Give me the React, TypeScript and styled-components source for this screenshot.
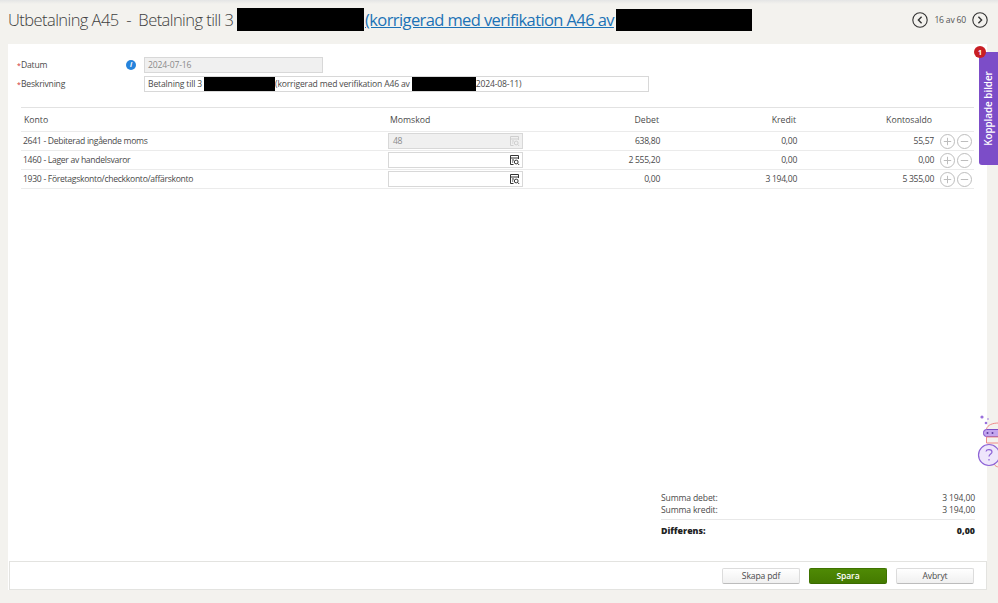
import React from 'react';
import styled, { createGlobalStyle } from 'styled-components';

const GlobalStyle = createGlobalStyle`
  html, body {
    margin: 0;
    padding: 0;
    height: 100%;
    overflow: hidden;
    background: #f3f2ee;
    font-family: "Open Sans", "Liberation Sans", sans-serif;
    color: #4a4a4a;
  }
`;

const Page = styled.div`
  position: relative;
  width: 998px;
  height: 603px;
  display: flex;
  flex-direction: column;
  overflow: hidden;
  background: linear-gradient(#e4e5e5, #f3f2ee 4px);
`;

const Header = styled.header`
  height: 44px;
  flex: none;
  display: flex;
  align-items: center;
  padding: 0 10px 5px 8px;
  box-sizing: border-box;
`;

const Title = styled.h1`
  margin: 0;
  display: flex;
  align-items: center;
  flex: 1;
  font-size: 16.5px;
  font-weight: 300;
  letter-spacing: -0.56px;
  color: #404040;
  white-space: pre;
`;

const TitleLink = styled.a`
  font-size: 16.5px;
  font-weight: 400;
  letter-spacing: -0.6px;
  color: #1c72b6;
  text-decoration: underline;
  margin: 0 2px 0 1px;
`;

const Redacted = styled.span<{ $w: number; $h: number }>`
  display: inline-block;
  flex: none;
  width: ${(p) => p.$w}px;
  height: ${(p) => p.$h}px;
  background: #000;
`;

const Pager = styled.div`
  display: flex;
  align-items: center;
  gap: 6px;
  font-size: 8.6px;
  letter-spacing: -0.2px;
  color: #555;
`;

const Panel = styled.main`
  margin: 0 11px 13px 8px;
  flex: 1;
  min-height: 0;
  background: #fff;
  display: flex;
  flex-direction: column;
`;

const Body = styled.div`
  flex: 1;
  display: flex;
  flex-direction: column;
  padding: 11px 13px 0;
`;

const FormRow = styled.div`
  display: grid;
  grid-template-columns: 105px 18px 1fr;
  align-items: center;
  height: 19px;
`;

const Label = styled.label`
  font-size: 8.6px;
  letter-spacing: -0.2px;
  color: #4a4a4a;
  margin-left: -4px;
  &::before {
    content: '*';
    display: inline-block;
    width: 4px;
    font-size: 7px;
    color: #d0312d;
  }
`;

const InfoDot = styled.span`
  width: 10px;
  height: 10px;
  border-radius: 50%;
  background: #2583dc;
  color: #fff;
  font-size: 7px;
  font-weight: 700;
  font-style: italic;
  display: flex;
  align-items: center;
  justify-content: center;
`;

const DateField = styled.div`
  width: 179px;
  height: 16px;
  box-sizing: border-box;
  background: #f0f0f0;
  border: 1px solid #d8d8d8;
  font-size: 8.6px;
  letter-spacing: -0.15px;
  color: #8a8a8a;
  padding: 0 3px;
  display: flex;
  align-items: center;
`;

const DescField = styled.div`
  width: 505px;
  height: 16px;
  box-sizing: border-box;
  background: #fff;
  border: 1px solid #d8d8d8;
  font-size: 8.6px;
  letter-spacing: -0.17px;
  color: #4a4a4a;
  padding: 0 3px;
  display: flex;
  align-items: center;
  white-space: pre;
`;

const Table = styled.div`
  margin-top: 14px;
  border-top: 1px solid #e2e2e2;
`;

const Row = styled.div<{ $head?: boolean }>`
  display: grid;
  grid-template-columns: 367px 135px 137px 137px 137px 40px;
  align-items: center;
  height: ${(p) => (p.$head ? 23 : 18)}px;
  border-bottom: 1px solid #ebebeb;
  font-size: ${(p) => (p.$head ? 8.7 : 8.6)}px;
  letter-spacing: ${(p) => (p.$head ? 0 : -0.3)}px;
  color: #4a4a4a;
`;

const Cell = styled.div<{ $right?: boolean; $inset?: number; $end?: number }>`
  text-align: ${(p) => (p.$right ? 'right' : 'left')};
  padding-left: ${(p) => p.$inset ?? 0}px;
  padding-right: ${(p) => p.$end ?? 0}px;
  white-space: nowrap;
`;

const CodeField = styled.div<{ $disabled?: boolean }>`
  height: 16px;
  box-sizing: border-box;
  border: 1px solid #d8d8d8;
  background: ${(p) => (p.$disabled ? '#f0f0f0' : '#fff')};
  color: #8a8a8a;
  padding: 0 2px 0 4px;
  display: flex;
  align-items: center;
  justify-content: space-between;
`;

const Actions = styled.div`
  display: flex;
  gap: 2px;
  padding-left: 6px;
`;

const RoundAction = styled.span`
  width: 15px;
  height: 15px;
  flex: none;
  color: #bdbdbd;
  display: block;
`;

const Totals = styled.div`
  margin-top: auto;
  margin-left: 640px;
  width: 314px;
  padding-bottom: 24px;
  font-size: 8.6px;
  letter-spacing: -0.15px;
  color: #4a4a4a;
`;

const TotalLine = styled.div`
  display: flex;
  justify-content: space-between;
  height: 11.5px;
  line-height: 11.5px;
`;

const DiffLine = styled.div`
  display: flex;
  justify-content: space-between;
  margin-top: 3px;
  padding-top: 5px;
  border-top: 1px solid #e8e8e8;
  font-size: 8.8px;
  letter-spacing: 0;
  font-weight: 800;
  color: #222;
  line-height: 12px;
`;

const Footer = styled.footer`
  height: 29px;
  flex: none;
  box-sizing: border-box;
  margin-left: 1px;
  background: #fff;
  border: 1px solid #e3e3e0;
  display: flex;
  align-items: center;
  justify-content: flex-end;
  gap: 9px;
  padding: 0 12px 0 0;
`;

const Button = styled.button<{ $primary?: boolean }>`
  width: 78px;
  height: 16px;
  padding: 0;
  border-radius: 2px;
  font-family: inherit;
  font-size: 8.6px;
  letter-spacing: -0.15px;
  border: 1px solid ${(p) => (p.$primary ? '#3f7300' : '#dcdcdc')};
  border-bottom-color: ${(p) => (p.$primary ? '#3a6b00' : '#bcbcbc')};
  background: ${(p) => (p.$primary ? 'linear-gradient(#4f8a05, #447a00)' : 'linear-gradient(#fff, #f0f0f0)')};
  color: ${(p) => (p.$primary ? '#fff' : '#4a4a4a')};
  font-weight: ${(p) => (p.$primary ? 600 : 400)};
`;

const SideTab = styled.div`
  position: absolute;
  top: 52px;
  right: 0;
  width: 19px;
  height: 113px;
  background: #7c4dc8;
  border-radius: 3px 0 0 3px;
  color: #fff;
  font-size: 9.8px;
  font-weight: 600;
  display: flex;
  align-items: center;
  justify-content: center;
`;

const SideTabLabel = styled.span`
  transform: rotate(-90deg);
  white-space: nowrap;
`;

const Badge = styled.span`
  position: absolute;
  top: 46px;
  left: 974px;
  width: 12px;
  height: 12px;
  border-radius: 50%;
  background: #c81e24;
  color: #fff;
  font-size: 7px;
  font-weight: 700;
  display: flex;
  align-items: center;
  justify-content: center;
`;

const Mascot = styled.svg`
  position: absolute;
  top: 412px;
  left: 976px;
  width: 22px;
  height: 60px;
`;

const ArrowCircle = ({ dir }: { dir: 'left' | 'right' }) => (
  <svg width="16" height="16" viewBox="0 0 16 16" fill="none" stroke="#333" strokeWidth="1.1">
    <circle cx="8" cy="8" r="7.2" />
    <path
      d={dir === 'left' ? 'M9.6 4.8 6.4 8l3.2 3.2' : 'M6.4 4.8 9.6 8l-3.2 3.2'}
      strokeWidth="1.4"
    />
  </svg>
);

const LookupIcon = ({ disabled }: { disabled?: boolean }) => (
  <svg width="10" height="11" viewBox="0 0 10 11" fill="none" stroke={disabled ? '#cfcfcf' : '#333'} strokeWidth="1">
    <path d="M3.5 9.5H.5v-9h8v3.5M.5 3h8M2 5h2M2 7h1.200" />
    <circle cx="6.200" cy="7" r="1.900" />
    <path d="m7.600 8.400 1.600 1.600" />
  </svg>
);

const PlusIcon = () => (
  <RoundAction>
    <svg width="15" height="15" viewBox="0 0 15 15" fill="none" stroke="currentColor">
      <circle cx="7.5" cy="7.5" r="7" />
      <path d="M7.5 3.8v7.4M3.8 7.5h7.4" />
    </svg>
  </RoundAction>
);

const MinusIcon = () => (
  <RoundAction>
    <svg width="15" height="15" viewBox="0 0 15 15" fill="none" stroke="currentColor">
      <circle cx="7.5" cy="7.5" r="7" />
      <path d="M3.8 7.5h7.4" />
    </svg>
  </RoundAction>
);

const rows = [
  { konto: '2641 - Debiterad ingående moms', code: '48', disabled: true, debet: '638,80', kredit: '0,00', saldo: '55,57' },
  { konto: '1460 - Lager av handelsvaror', code: '', disabled: false, debet: '2 555,20', kredit: '0,00', saldo: '0,00' },
  { konto: '1930 - Företagskonto/checkkonto/affärskonto', code: '', disabled: false, debet: '0,00', kredit: '3 194,00', saldo: '5 355,00' },
];

export default function App() {
  return (
    <Page>
      <GlobalStyle />
      <Header>
        <Title>
          Utbetalning A45{'  -  '}Betalning till 3{' '}
          <Redacted $w={127} $h={23} />
          <TitleLink>(korrigerad med verifikation A46 av</TitleLink>
          <Redacted $w={136} $h={22} />
        </Title>
        <Pager>
          <ArrowCircle dir="left" />
          <span>16 av 60</span>
          <ArrowCircle dir="right" />
        </Pager>
      </Header>
      <Panel>
        <Body>
          <FormRow>
            <Label>Datum</Label>
            <InfoDot>i</InfoDot>
            <DateField>2024-07-16</DateField>
          </FormRow>
          <FormRow>
            <Label>Beskrivning</Label>
            <span />
            <DescField>
              Betalning till 3 <Redacted $w={71} $h={14} />(korrigerad med verifikation A46 av{' '}
              <Redacted $w={64} $h={14} />2024-08-11)
            </DescField>
          </FormRow>
          <Table>
            <Row $head>
              <Cell $inset={3}>Konto</Cell>
              <Cell $inset={2}>Momskod</Cell>
              <Cell $right $end={1}>Debet</Cell>
              <Cell $right $end={1}>Kredit</Cell>
              <Cell $right $end={2}>Kontosaldo</Cell>
              <span />
            </Row>
            {rows.map((r) => (
              <Row key={r.konto}>
                <Cell $inset={2}>{r.konto}</Cell>
                <CodeField $disabled={r.disabled}>
                  {r.code}
                  <span />
                  <LookupIcon disabled={r.disabled} />
                </CodeField>
                <Cell $right>{r.debet}</Cell>
                <Cell $right>{r.kredit}</Cell>
                <Cell $right>{r.saldo}</Cell>
                <Actions>
                  <PlusIcon />
                  <MinusIcon />
                </Actions>
              </Row>
            ))}
          </Table>
          <Totals>
            <TotalLine>
              <span>Summa debet:</span>
              <span>3 194,00</span>
            </TotalLine>
            <TotalLine>
              <span>Summa kredit:</span>
              <span>3 194,00</span>
            </TotalLine>
            <DiffLine>
              <span>Differens:</span>
              <span>0,00</span>
            </DiffLine>
          </Totals>
        </Body>
        <Footer>
          <Button>Skapa pdf</Button>
          <Button $primary>Spara</Button>
          <Button>Avbryt</Button>
        </Footer>
      </Panel>
      <SideTab>
        <SideTabLabel>Kopplade bilder</SideTabLabel>
      </SideTab>
      <Badge>1</Badge>
      <Mascot viewBox="0 0 22 60" fill="none">
        <circle cx="6" cy="5" r="1.600" fill="#9a70dc" />
        <circle cx="10" cy="11" r="1.300" fill="#9a70dc" />
        <circle cx="12" cy="7" r="0.800" fill="#9a70dc" />
        <path d="M10.500 17c1-4 6-6 12-6" stroke="#f08a8a" strokeWidth="1" />
        <rect x="7.500" y="17.500" width="20" height="7" rx="3" fill="#c3a6ee" stroke="#7c4dc8" />
        <circle cx="11.500" cy="21" r="1" fill="#5a3a9c" />
        <circle cx="16.500" cy="21" r="1" fill="#5a3a9c" />
        <path d="M10.500 25h14v6h-14z" stroke="#f08a8a" strokeWidth="1" />
        <path d="M18 52c1 2 3 3 5 3" stroke="#f08a8a" strokeWidth="1" />
        <circle cx="13" cy="43" r="10.500" fill="#eee6fb" stroke="#8d63d6" strokeWidth="1.200" />
        <path
          d="M10 39.500c.5-2.500 6-2.500 6 .5 0 2-3 2-3 4.500M13 47v1.500"
          stroke="#8d63d6"
          strokeWidth="1.200"
        />
      </Mascot>
    </Page>
  );
}
